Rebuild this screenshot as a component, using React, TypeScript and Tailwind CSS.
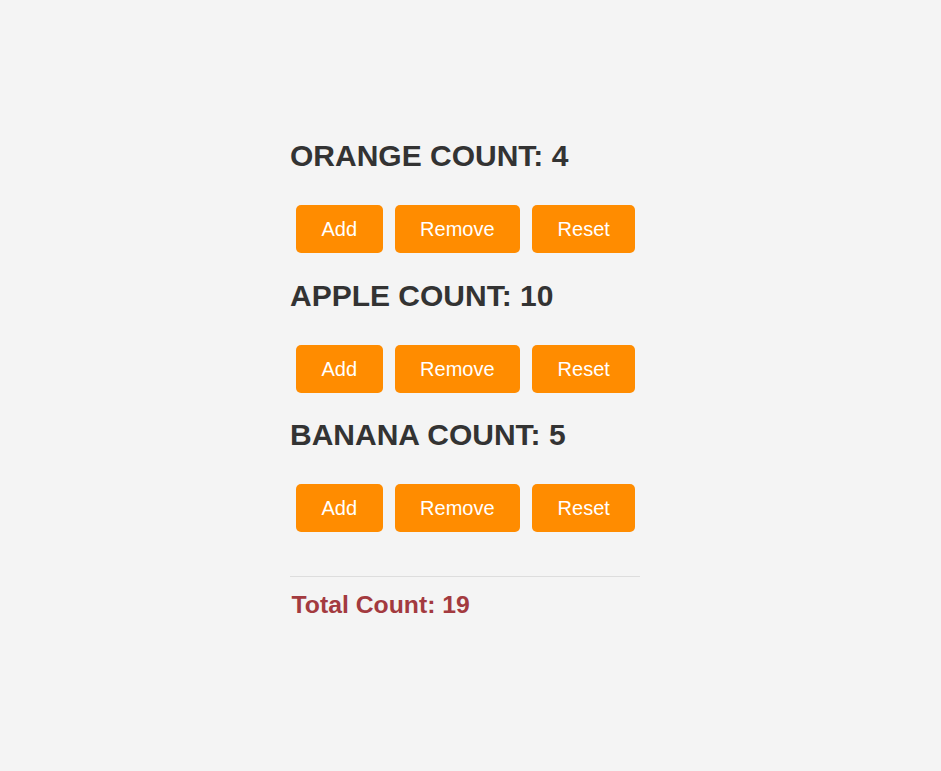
import { useState } from "react";

type Fruit = { name: string; count: number };

const INITIAL: Fruit[] = [
  { name: "Orange", count: 4 },
  { name: "Apple", count: 10 },
  { name: "Banana", count: 5 },
];

function CountButton({ label, onClick }: { label: string; onClick: () => void }) {
  return (
    <button
      onClick={onClick}
      className="mx-[6px] h-12 px-[25.5px] rounded-[5px] bg-[#ff8c00] text-white text-[20px] leading-none"
    >
      {label}
    </button>
  );
}

export default function App() {
  const [fruits, setFruits] = useState<Fruit[]>(INITIAL);

  const update = (i: number, fn: (n: number) => number) =>
    setFruits((prev) => prev.map((f, j) => (j === i ? { ...f, count: fn(f.count) } : f)));

  const total = fruits.reduce((sum, f) => sum + f.count, 0);

  return (
    <div className="min-h-[771px] bg-[#f4f4f4] text-[#333] font-['Liberation_Sans',Arial,sans-serif] pt-[139px]">
      <div className="w-[361px] mx-auto">
        <div className="w-[350px] flex flex-col gap-[25.5px]">
          {fruits.map((f, i) => (
            <div key={f.name}>
              <h2 className="text-[30px] leading-[34.5px] font-bold uppercase mb-[31.5px]">
                {f.name} Count: {f.count}
              </h2>
              <div className="flex">
                <CountButton label="Add" onClick={() => update(i, (n) => n + 1)} />
                <CountButton label="Remove" onClick={() => update(i, (n) => Math.max(0, n - 1))} />
                <CountButton label="Reset" onClick={() => update(i, () => 0)} />
              </div>
            </div>
          ))}
        </div>
        <hr className="w-[350px] mt-[44px] border-0 border-t border-[#dddddd]" />
        <p className="mt-[9px] pl-[1.5px] text-[24.75px] font-bold text-[#a33a3f]">Total Count: {total}</p>
      </div>
    </div>
  );
}
